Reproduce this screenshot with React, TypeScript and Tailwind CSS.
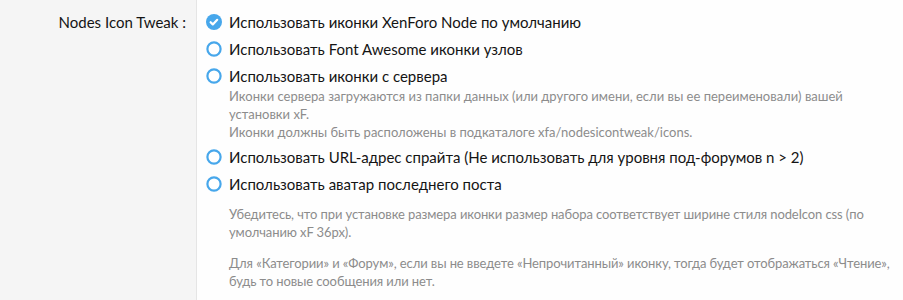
import React from "react";

const options = [
  { label: "Использовать иконки XenForo Node по умолчанию", checked: true },
  { label: "Использовать Font Awesome иконки узлов" },
  {
    label: "Использовать иконки с сервера",
    hint: [
      "Иконки сервера загружаются из папки данных (или другого имени, если вы ее переименовали) вашей установки xF.",
      "Иконки должны быть расположены в подкаталоге xfa/nodesicontweak/icons.",
    ],
  },
  { label: "Использовать URL-адрес спрайта (Не использовать для уровня под-форумов n > 2)" },
  { label: "Использовать аватар последнего поста" },
];

function Radio({ checked }: { checked?: boolean }) {
  if (checked) {
    return (
      <svg width="16" height="16" viewBox="0 0 16 16" className="shrink-0">
        <circle cx="8" cy="8" r="8" fill="#47a7eb" />
        <path d="M4.6 8.2l2.2 2.2 4.4-4.6" fill="none" stroke="#fff" strokeWidth="2.2" strokeLinecap="round" strokeLinejoin="round" />
      </svg>
    );
  }
  return (
    <svg width="16" height="16" viewBox="0 0 16 16" className="shrink-0">
      <circle cx="8" cy="8" r="6.6" fill="#fff" stroke="#47a7eb" strokeWidth="2.2" />
    </svg>
  );
}

export default function App() {
  return (
    <div className="flex w-[903px] h-[300px] overflow-hidden bg-[#fefefe] font-['Lato',sans-serif] text-[#141414]">
      <div className="w-[197px] shrink-0 bg-[#f5f5f5] border-r border-[#e5e5e5] pt-[11px] pr-[10px] text-right text-[15px] leading-[22px]">
        Nodes Icon Tweak :
      </div>
      <div className="flex-1 pl-[9px] pt-[11px] pr-[10px]">
        <ul className="flex flex-col gap-[5px]">
          {options.map((o) => (
            <li key={o.label} className="flex items-start gap-[7px]">
              <div className="pt-[3px]">
                <Radio checked={o.checked} />
              </div>
              <div>
                <div className="text-[15px] leading-[22px]">{o.label}</div>
                {o.hint && (
                  <div className="text-[13px] leading-[18px] text-[#8c8c8c] pr-[20px]">
                    {o.hint.map((h) => (
                      <p key={h}>{h}</p>
                    ))}
                  </div>
                )}
              </div>
            </li>
          ))}
        </ul>
        <div className="pl-[23px] mt-[10px] text-[13px] leading-[18px] text-[#8c8c8c] tracking-[-0.1px]">
          <p>
            Убедитесь, что при установке размера иконки размер набора соответствует ширине стиля nodeIcon css (по умолчанию xF 36px).
          </p>
          <p className="mt-[13px]">
            Для «Категории» и «Форум», если вы не введете «Непрочитанный» иконку, тогда будет отображаться «Чтение», будь то новые сообщения или нет.
          </p>
        </div>
      </div>
    </div>
  );
}
